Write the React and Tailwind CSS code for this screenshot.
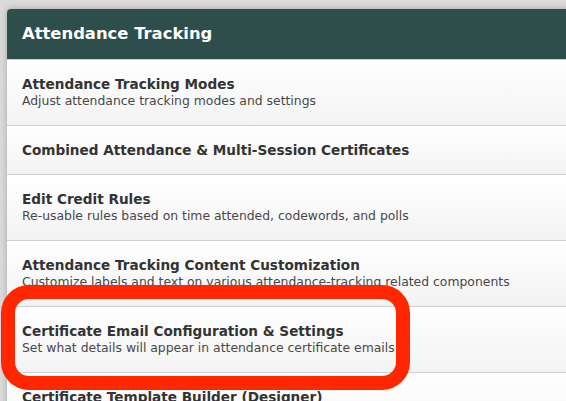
export default function App() {
  const rows = [
    { t: "Attendance Tracking Modes", s: "Adjust attendance tracking modes and settings" },
    { t: "Combined Attendance & Multi-Session Certificates" },
    { t: "Edit Credit Rules", s: "Re-usable rules based on time attended, codewords, and polls" },
    { t: "Attendance Tracking Content Customization", s: "Customize labels and text on various attendance-tracking related components" },
    { t: "Certificate Email Configuration & Settings", s: "Set what details will appear in attendance certificate emails" },
    { t: "Certificate Template Builder (Designer)", s: "Design and customize attendance certificate templates" },
  ];
  return (
    <div className="relative w-[566px] h-[401px] overflow-hidden bg-[#dadada]" style={{ fontFamily: '"DejaVu Sans", "Noto Sans", sans-serif' }}>
      <div className="pt-[9px] pl-[7px]">
        <div className="w-[580px] rounded-tl-[4px] overflow-hidden bg-white shadow-[0_0_6px_rgba(0,0,0,0.25)]">
          <div className="h-[50px] bg-[#2e4e4b] flex items-center pl-[15px]">
            <span className="text-white font-bold text-[16.4px]">Attendance Tracking</span>
          </div>
          {rows.map((r, i) => (
            <div key={i} className="border-t border-[#cfcfcf] bg-gradient-to-b from-[#ffffff] to-[#f3f3f3] pl-[15px] pt-[15px] pb-[15px]">
              <div className="text-[13.6px] leading-[18px] font-bold text-[#333333]">{r.t}</div>
              {r.s && <div className="text-[12.4px] leading-[16px] text-[#484848] pb-[1px]">{r.s}</div>}
            </div>
          ))}
        </div>
      </div>
      <div className="absolute left-[1px] top-[285px] w-[409px] h-[105px] border-[14px] border-[#ff2600] rounded-[28px]" />
    </div>
  );
}
